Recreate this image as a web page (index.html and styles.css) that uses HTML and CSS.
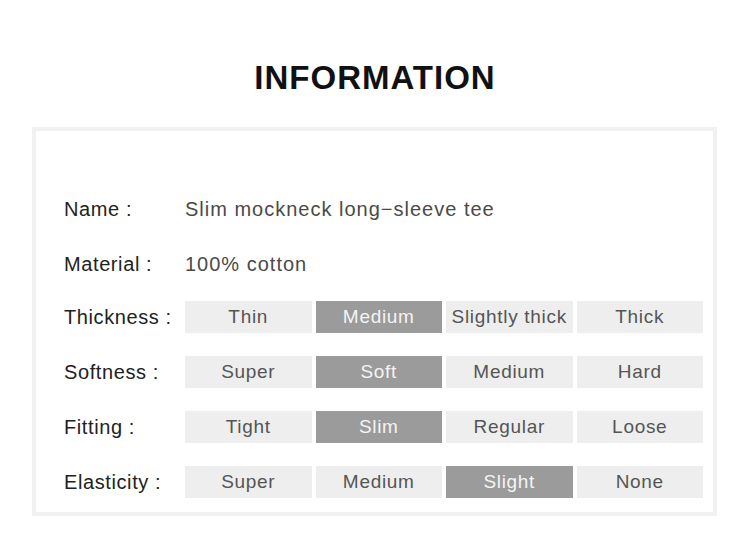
FILE: index.html
```html
<!DOCTYPE html>
<html lang="en">
<head>
<meta charset="utf-8">
<title>Information</title>
<link rel="stylesheet" href="styles.css">
</head>
<body>
<h1 class="title">INFORMATION</h1>
<section class="box">
  <div class="row text-row first">
    <div class="label">Name :</div>
    <div class="value">Slim mockneck long−sleeve tee</div>
  </div>
  <div class="row text-row">
    <div class="label">Material :</div>
    <div class="value">100% cotton</div>
  </div>
  <div class="row scale-row first-scale">
    <div class="label">Thickness :</div>
    <div class="cells">
      <span class="cell">Thin</span>
      <span class="cell on">Medium</span>
      <span class="cell">Slightly thick</span>
      <span class="cell">Thick</span>
    </div>
  </div>
  <div class="row scale-row">
    <div class="label">Softness :</div>
    <div class="cells">
      <span class="cell">Super</span>
      <span class="cell on">Soft</span>
      <span class="cell">Medium</span>
      <span class="cell">Hard</span>
    </div>
  </div>
  <div class="row scale-row">
    <div class="label">Fitting :</div>
    <div class="cells">
      <span class="cell">Tight</span>
      <span class="cell on">Slim</span>
      <span class="cell">Regular</span>
      <span class="cell">Loose</span>
    </div>
  </div>
  <div class="row scale-row">
    <div class="label">Elasticity :</div>
    <div class="cells">
      <span class="cell">Super</span>
      <span class="cell">Medium</span>
      <span class="cell on">Slight</span>
      <span class="cell">None</span>
    </div>
  </div>
</section>
</body>
</html>
```

FILE: styles.css
```css
html, body {
  margin: 0;
  padding: 0;
  background: #ffffff;
}

body {
  font-family: "Liberation Sans", Arial, sans-serif;
  width: 750px;
  height: 547px;
  overflow: hidden;
}

.title {
  margin: 58px 0 0 0;
  height: 40px;
  line-height: 40px;
  font-size: 33px;
  font-weight: bold;
  letter-spacing: 1px;
  color: #111111;
  text-align: center;
}

.box {
  margin: 29px 33px 0 32px;
  border: 4px solid #f1f1f1;
  background: #ffffff;
  padding: 62px 10px 14px 28px;
  display: flex;
  flex-direction: column;
}

.row {
  display: flex;
  align-items: center;
  height: 32px;
}

.text-row + .text-row {
  margin-top: 23px;
}

.first-scale {
  margin-top: 21px;
}

.scale-row + .scale-row {
  margin-top: 23px;
}

.label {
  width: 121px;
  flex: none;
  font-size: 20px;
  letter-spacing: 0.6px;
  color: #222222;
  line-height: 32px;
}

.value {
  font-size: 20px;
  letter-spacing: 1px;
  color: #4a4a4a;
  line-height: 32px;
}

.cells {
  display: grid;
  grid-template-columns: repeat(4, 1fr);
  column-gap: 4px;
  width: 518px;
}

.cell {
  height: 32px;
  line-height: 32px;
  text-align: center;
  background: #eeeeee;
  color: #555555;
  font-size: 19px;
  letter-spacing: 0.7px;
  white-space: nowrap;
}

.cell.on {
  background: #9b9b9b;
  color: #f4f4f4;
}
```
